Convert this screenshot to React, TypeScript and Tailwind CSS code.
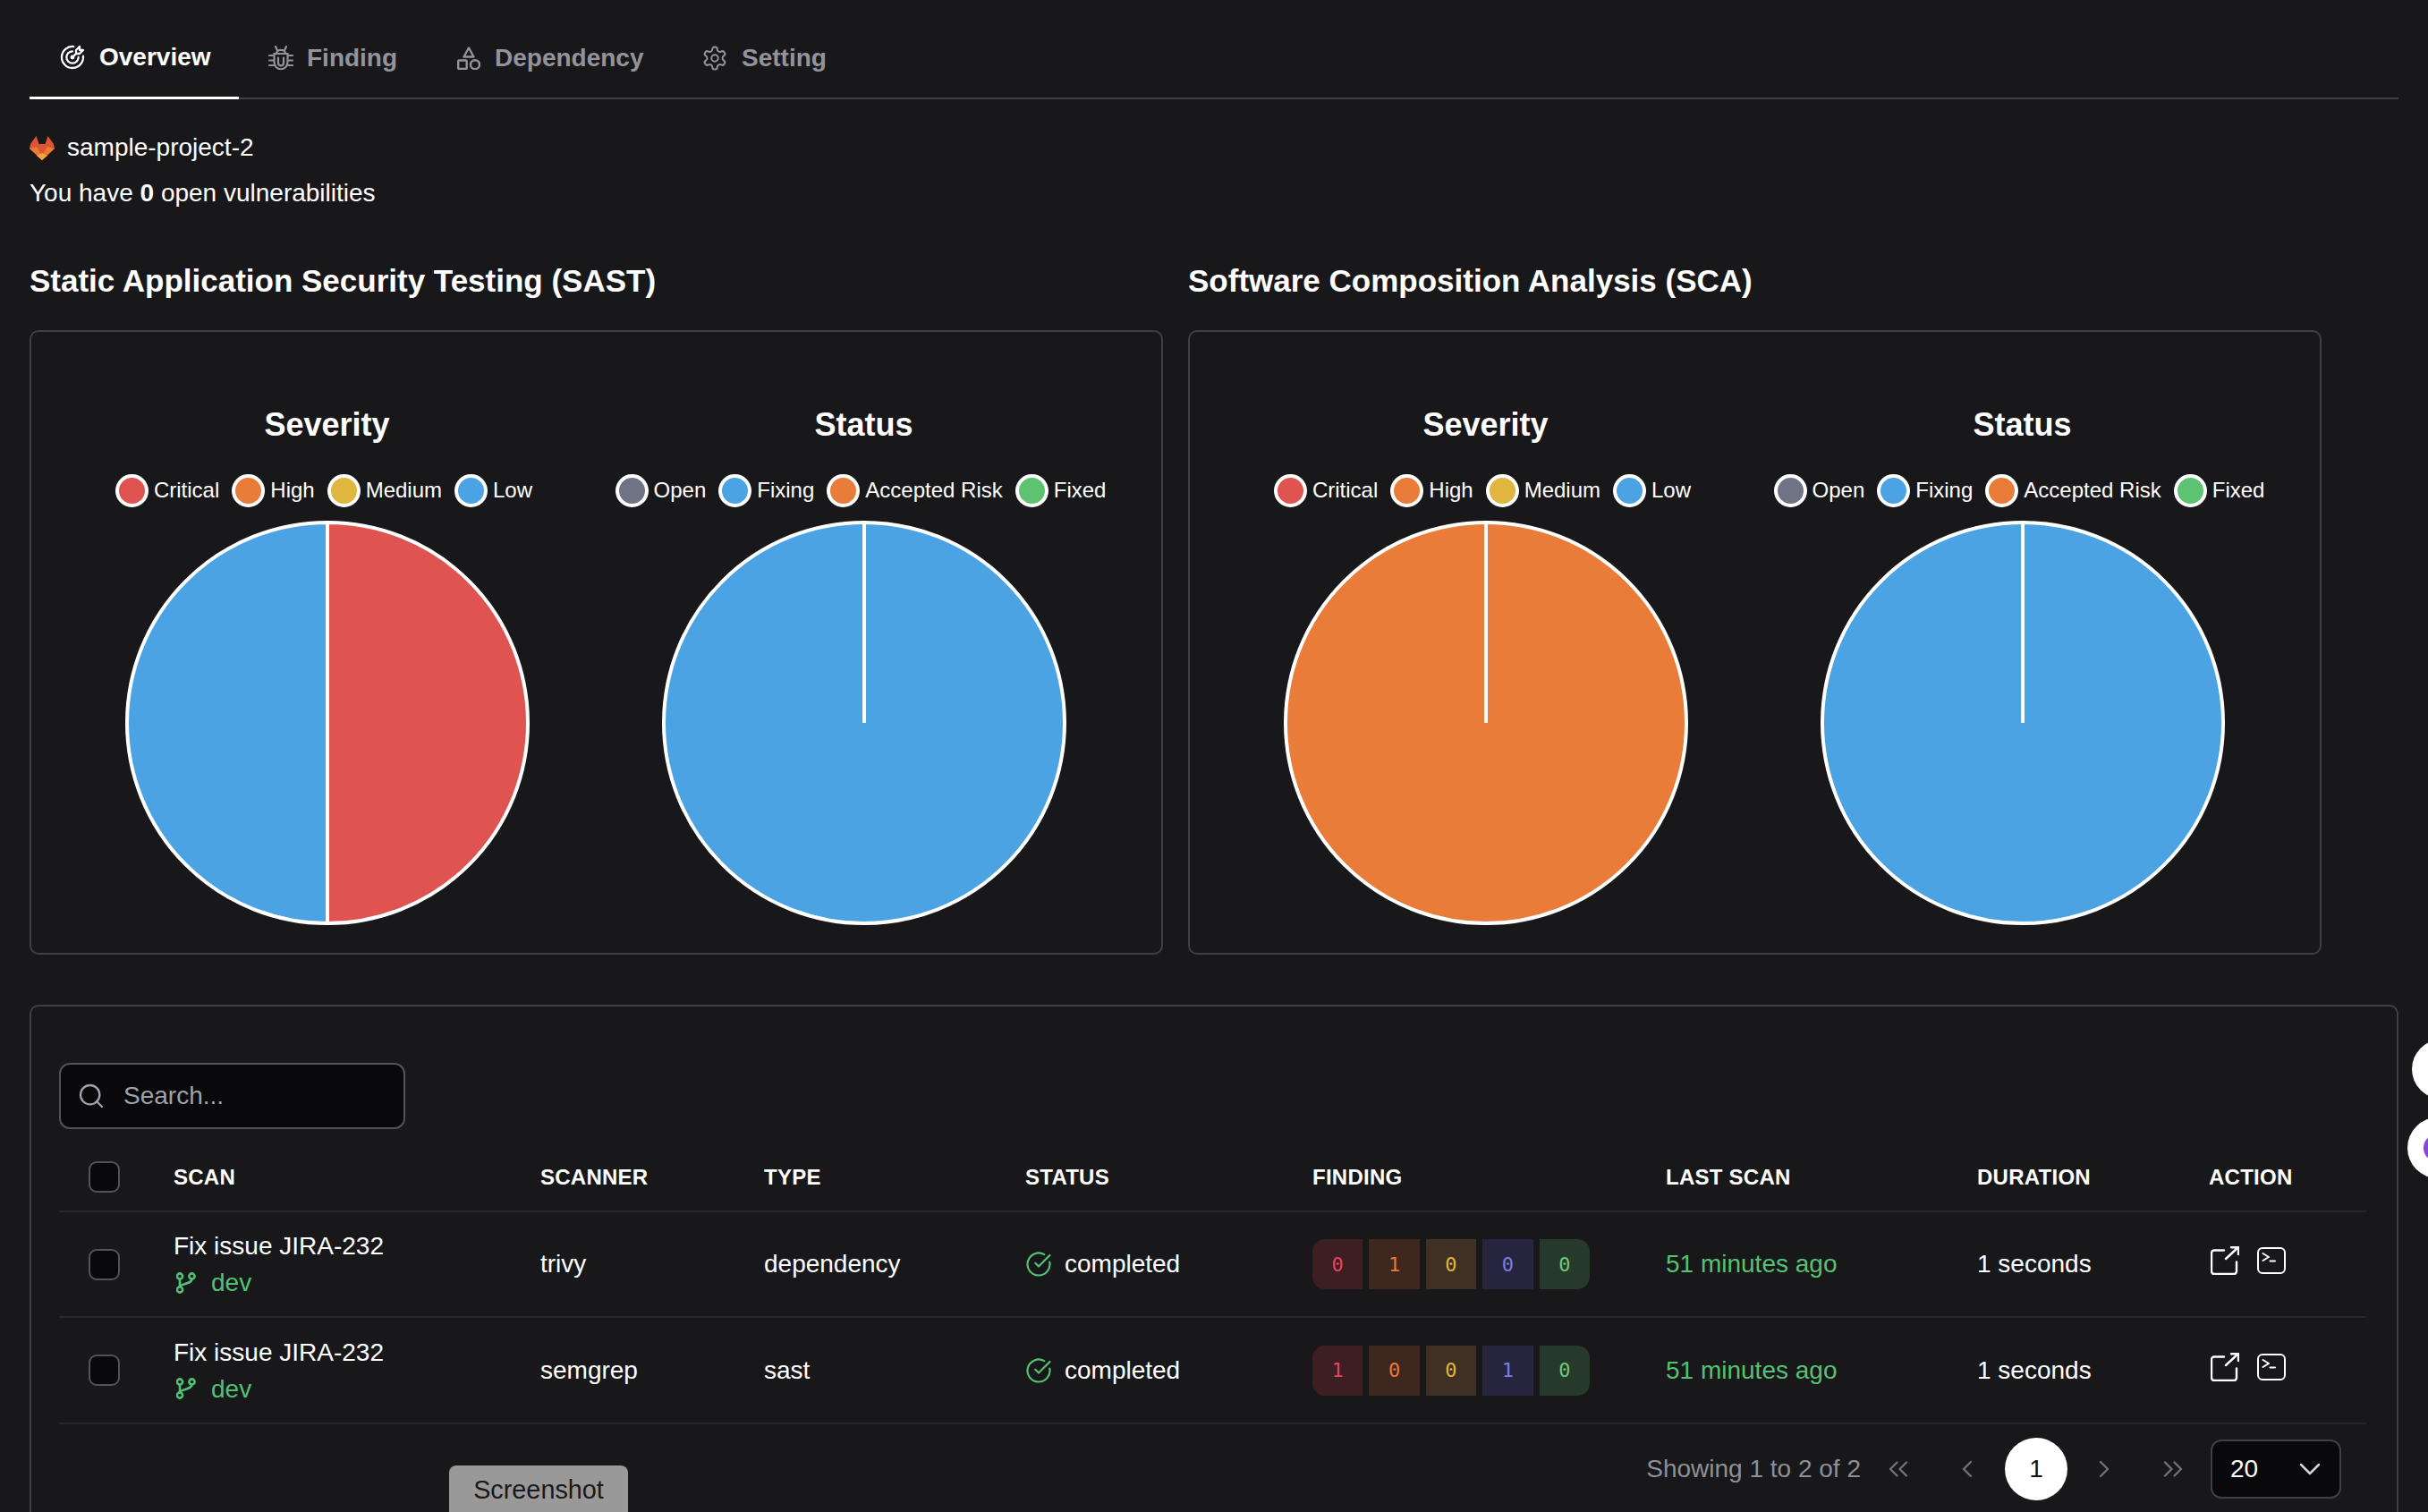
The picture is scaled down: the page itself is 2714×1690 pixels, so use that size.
import { LuChevronDown, LuChevronLeft, LuChevronRight, LuChevronsLeft, LuChevronsRight, LuCircleCheckBig, LuSearch, LuSettings } from "react-icons/lu";
import { TbTargetArrow } from "react-icons/tb";

const sans = "font-['Liberation_Sans',Arial,sans-serif]";

function GitlabLogo() {
    return <svg viewBox="0 0 28 27" className="w-[28px] h-[27px]">
        <path d="M0 14 L1 9 L7.5 0 L10.5 9 L17.5 9 L20.5 0 L27 9 L28 14 L14 27 Z" fill="#dd5530" />
        <path d="M0 14 L8 12 L14 22 L20 12 L28 14 L14 27 Z" fill="#ea7a38" />
        <path d="M8 22 L14 19 L20 22 L14 27 Z" fill="#f5a33a" />
    </svg>;
}

function BugIcon() {
    return <svg viewBox="0 0 28 28" className="w-[28px] h-[28px]" fill="none" stroke="currentColor" strokeWidth="2.2" strokeLinecap="round">
        <path d="M8 1 L10 5.5 M20 1 L18 5.5" />
        <path d="M9 9 C9 3.5 19 3.5 19 9" />
        <path d="M6.5 9 H21.5 V18 C21.5 29 6.5 29 6.5 18 Z" />
        <path d="M11 13.5 V19 C11 23.5 17 23.5 17 19 V13.5" />
        <path d="M1 11 H6 M1 16.5 H6 M1 22 H6 M22 11 H27 M22 16.5 H27 M22 22 H27" />
    </svg>;
}

function ShapesIcon() {
    return <svg viewBox="0 0 26 26" className="w-[26px] h-[26px]" fill="none" stroke="currentColor" strokeWidth="2.4" strokeLinejoin="round">
        <path d="M13 1.5 L18.5 11.5 H7.5 Z" />
        <rect x="1.2" y="15.5" width="9.5" height="9.5" rx="1" />
        <circle cx="20" cy="20.2" r="5" />
    </svg>;
}

function BranchIcon() {
    return <svg viewBox="0 0 22 24" className="w-[22px] h-[24px] ml-[3px]" fill="none" stroke="currentColor" strokeWidth="2.6">
        <circle cx="4" cy="4.5" r="3.1" />
        <circle cx="17.5" cy="4.5" r="3.1" />
        <circle cx="4" cy="19.5" r="3.1" />
        <path d="M4 7.6 V16.4" />
        <path d="M17.5 7.6 C17.5 12.5 9 12 4 15.5" />
    </svg>;
}

function OpenIcon() {
    return <svg viewBox="0 0 32 32" className="w-[32px] h-[32px]" fill="none" stroke="currentColor" strokeWidth="2.4" strokeLinecap="round">
        <path d="M15 4.5 H4 a3 3 0 0 0 -3 3 V28 a3 3 0 0 0 3 3 H26 a3 3 0 0 0 3 -3 V17.5" />
        <path d="M17 14 L30.5 1.5 M23 1.2 H31 V9" />
    </svg>;
}

function TerminalIcon() {
    return <svg viewBox="0 0 32 30" className="w-[32px] h-[30px] mt-[1px]" fill="none" stroke="currentColor" strokeWidth="2" strokeLinecap="round" strokeLinejoin="round">
        <rect x="1" y="1" width="30" height="28" rx="5" />
        <path d="M6.5 7 L13 11 L6.5 15 M14.5 15.5 H20" />
    </svg>;
}

function Tabs() {
    const items = [
        { label: "Finding", icon: <BugIcon />, className: "w-[210px] pl-[33px] gap-[15px]" },
        { label: "Dependency", icon: <ShapesIcon />, className: "w-[277px] pl-[34px] gap-[16px]" },
        { label: "Setting", icon: <LuSettings size={30} strokeWidth={1.6} />, className: "w-[210px] pl-[30px] gap-[15px]" },
    ];
    return <div className="flex flex-row border-b-2 border-[#3f3f46] h-[111px]">
        <div className="w-[234px] h-[111px] pt-[20px] pl-[32px] flex items-center gap-[14px] border-b-[3px] border-white text-white text-[28px] font-bold">
            <TbTargetArrow size={32} strokeWidth={1.7} />
            <span>Overview</span>
        </div>
        {items.map((item) => <div key={item.label} className={"h-[109px] pt-[20px] flex items-center text-[#93939c] text-[28px] font-bold " + item.className}>
            {item.icon}
            <span>{item.label}</span>
        </div>)}
    </div>;
}

function Legend({ items }: { items: { label: string; color: string }[] }) {
    return <div className="flex justify-center items-center gap-[14px] h-[38px] pr-[7px]">
        {items.map((i) => <div key={i.label} className="flex items-center gap-[6px] text-white text-[24px]">
            <span className="w-[37px] h-[37px] rounded-full border-[4px] border-white" style={{ backgroundColor: i.color }} />
            <span>{i.label}</span>
        </div>)}
    </div>;
}

function Pie({ slices }: { slices: string[] }) {
    // two equal slices or a whole circle with one seam, same as chart.js draws them
    return <svg viewBox="0 0 456 456" className="w-[456px] h-[456px]">
        {slices.length === 2 ? <>
            <path d="M228 228 L228 4 A224 224 0 0 1 228 452 Z" fill={slices[0]} stroke="#fff" strokeWidth="4" />
            <path d="M228 228 L228 452 A224 224 0 0 1 228 4 Z" fill={slices[1]} stroke="#fff" strokeWidth="4" />
        </> : <>
            <circle cx="228" cy="228" r="224" fill={slices[0]} stroke="#fff" strokeWidth="4" />
            <line x1="228" y1="4" x2="228" y2="228" stroke="#fff" strokeWidth="4" />
        </>}
    </svg>;
}

const severity = [
    { label: "Critical", color: "#df5350" },
    { label: "High", color: "#e97c38" },
    { label: "Medium", color: "#e1b63f" },
    { label: "Low", color: "#4ba3e3" },
];
const status = [
    { label: "Open", color: "#6f7385" },
    { label: "Fixing", color: "#4ba3e3" },
    { label: "Accepted Risk", color: "#e97c38" },
    { label: "Fixed", color: "#5dc370" },
];

function ChartCol({ title, legend, slices }: { title: string; legend: { label: string; color: string }[]; slices: string[] }) {
    return <div className="w-[600px] flex flex-col items-center">
        <div className="h-[42px] text-white text-[36px] font-bold leading-[42px]">{title}</div>
        <div className="mt-[33px]"><Legend items={legend} /></div>
        <div className="mt-[13px]"><Pie slices={slices} /></div>
    </div>;
}

function ChartCard({ title, slices }: { title: string; slices: string[] }) {
    return <div className="w-[1267px] flex flex-col">
        <div className="h-[42px] text-white text-[35px] font-bold leading-[42px]">{title}</div>
        <div className="mt-[34px] h-[698px] border-2 border-[#3f3f46] rounded-[10px] pt-[83px] pl-[30.5px] flex flex-row">
            <ChartCol title="Severity" legend={severity} slices={slices} />
            <ChartCol title="Status" legend={status} slices={["#4ba3e3"]} />
        </div>
    </div>;
}

const gridCols = "grid grid-cols-[128px_410px_250px_292px_321px_395px_348px_259px_176px]";
const cellBoxes = ["bg-[#3c1e23] text-[#e1475f] rounded-l-[14px]", "bg-[#3e271f] text-[#e97a35]", "bg-[#3e3023] text-[#e5b53c]", "bg-[#26243f] text-[#7780e0]", "bg-[#27392b] text-[#6acb7c] rounded-r-[14px]"];

function Checkbox() {
    return <div className="ml-[33px] w-[35px] h-[35px] bg-[#09090b] border-2 border-[#52525b] rounded-[9px]" />;
}

function Row({ scanner, type, counts, height }: { scanner: string; type: string; counts: number[]; height: string }) {
    return <div className={gridCols + " items-center border-b-2 border-[#27272a] text-white text-[28px] " + height}>
        <Checkbox />
        <div className="flex flex-col gap-[8px]">
            <div className="leading-[33px]">Fix issue JIRA-232</div>
            <div className="flex items-center gap-[17px] text-[#4fc173] leading-[33px]">
                <BranchIcon />
                <span>dev</span>
            </div>
        </div>
        <div>{scanner}</div>
        <div>{type}</div>
        <div className="flex items-center gap-[14px]">
            <LuCircleCheckBig size={30} strokeWidth={1.75} className="text-[#55c172]" />
            <span>completed</span>
        </div>
        <div className="flex gap-[7px]">
            {counts.map((c, i) => <div key={i} className={"w-[56.4px] h-[56px] flex items-center justify-center text-[22px] font-['DejaVu_Sans_Mono',monospace] " + cellBoxes[i]}>{c}</div>)}
        </div>
        <div className="text-[#55c172]">51 minutes ago</div>
        <div>1 seconds</div>
        <div className="flex items-start gap-[20px] -mt-[8px] ml-[1.5px]">
            <OpenIcon />
            <TerminalIcon />
        </div>
    </div>;
}

function Pagination() {
    return <div className="flex items-center justify-end h-[100px] pr-[28px] text-[28px]">
        <span className="text-[#8f8f96]">Showing 1 to 2 of 2</span>
        <div className="flex items-center text-[#71717a] ml-[24px]">
            <LuChevronsLeft size={36} strokeWidth={1.6} />
            <LuChevronLeft size={32} strokeWidth={1.8} className="ml-[43px]" />
            <div className="ml-[26px] mr-[25px] w-[70px] h-[70px] rounded-full bg-white text-[#111] text-[28px] flex items-center justify-center">1</div>
            <LuChevronRight size={32} strokeWidth={1.8} />
            <LuChevronsRight size={36} strokeWidth={1.6} className="ml-[43px]" />
        </div>
        <div className="ml-[24px] w-[146px] h-[66px] bg-[#09090b] border-2 border-[#3f3f46] rounded-[12px] pl-[20px] pr-[13px] flex items-center justify-between text-white">
            <span>20</span>
            <LuChevronDown size={40} strokeWidth={1.5} className="text-[#d4d4d8]" />
        </div>
    </div>;
}

export default function App() {
    return <div className={"w-[2714px] h-[1690px] overflow-hidden bg-[#18181b] relative px-[33px] " + sans}>
        <Tabs />
        <div className="mt-[34px] flex items-center gap-[14px] h-[40px] text-white text-[28px]">
            <GitlabLogo />
            <span>sample-project-2</span>
        </div>
        <div className="mt-[11px] h-[40px] leading-[40px] text-white text-[28px]">You have <b>0</b> open vulnerabilities</div>
        <div className="mt-[57px] flex flex-row gap-[28px]">
            <ChartCard title="Static Application Security Testing (SAST)" slices={["#df5350", "#4ba3e3"]} />
            <ChartCard title="Software Composition Analysis (SCA)" slices={["#e97c38"]} />
        </div>
        <div className="mt-[56px] h-[700px] border-2 border-[#3f3f46] rounded-[10px] pl-[31px] pr-[34px] pt-[63px]">
            <div className="w-[387px] h-[74px] bg-[#09090b] border-2 border-[#52525b] rounded-[12px] flex items-center pl-[18px] gap-[20px] text-[28px] text-[#a1a1aa]">
                <LuSearch size={32} strokeWidth={1.75} />
                <span>Search...</span>
            </div>
            <div className={gridCols + " items-center h-[93px] pt-[16px] border-b-2 border-[#27272a] text-white text-[24px] tracking-[0.25px] font-bold"}>
                <Checkbox />
                <div>SCAN</div>
                <div>SCANNER</div>
                <div>TYPE</div>
                <div>STATUS</div>
                <div>FINDING</div>
                <div>LAST SCAN</div>
                <div>DURATION</div>
                <div>ACTION</div>
            </div>
            <Row scanner="trivy" type="dependency" counts={[0, 1, 0, 0, 0]} height="h-[118px]" />
            <Row scanner="semgrep" type="sast" counts={[1, 0, 0, 1, 0]} height="h-[119px]" />
            <Pagination />
        </div>
        <div className="absolute left-[502px] top-[1638px] w-[200px] h-[60px] rounded-[8px] bg-[#999999] text-[#1a1a1a] text-[28.8px] pt-[6px] text-center">Screenshot</div>
        <div className="absolute left-[2696px] top-[1162px] w-[66px] h-[66px] rounded-full bg-white" />
        <div className="absolute left-[2691px] top-[1249px] w-[68px] h-[68px] rounded-full bg-white p-[18px]">
            <div className="w-[32px] h-[32px] rounded-full bg-[#8a45e0]" />
        </div>
    </div>;
}
